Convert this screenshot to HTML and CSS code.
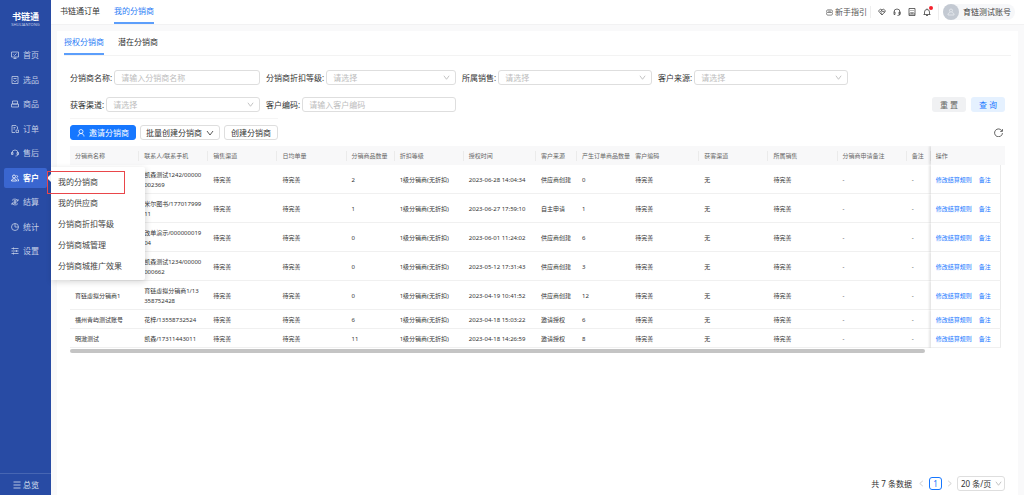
FILE: index.html
```html
<!DOCTYPE html>
<html lang="zh-CN">
<head>
<meta charset="utf-8">
<title>我的分销商</title>
<link rel="stylesheet" href="styles.css">
</head>
<body>
<div class="app">
  <aside class="sidebar">
    <div class="logo"><strong>书链通</strong><small>SHULIANTONG</small></div>
    <nav class="menu">
      <a href="#"><svg viewBox="0 0 16 16"><path d="M1 2h14v10H1zM5 15h6M8 12v3M5 7l2 2 4-4"/></svg>首页</a>
      <a href="#"><svg viewBox="0 0 16 16"><path d="M2 1h12v14H2zM5 5h6M5 8c0 4 6 4 6 0"/></svg>选品</a>
      <a href="#"><svg viewBox="0 0 16 16"><path d="M3 2h10v6H3zM1 8h14v6H1z"/></svg>商品</a>
      <a href="#"><svg viewBox="0 0 16 16"><path d="M8 15H2V1h8l3 3v4M5 5h4M5 8h3M10 10h5v5h-5z"/></svg>订单</a>
      <a href="#"><svg viewBox="0 0 16 16"><path d="M2 10V8a6 6 0 0 1 12 0v2c0 3-2 4-5 4M1 7h3v4H1zM12 7h3v4h-3z"/></svg>售后</a>
      <a href="#" class="active"><svg viewBox="0 0 16 16"><circle cx="6" cy="5" r="3"/><path d="M1 14c0-6 10-6 10 0zM11 3c3 0 3 4 0 4M12 9c2 1 3 2 3 5h-2"/></svg>客户</a>
      <a href="#"><svg viewBox="0 0 16 16"><path d="M14 6A7 7 0 0 0 2 5M2 10a7 7 0 0 0 12 1M14 2v4h-3M2 14v-4h3M6 4l2 3 2-3M8 7v5M5 8h6M5 10h6"/></svg>结算</a>
      <a href="#"><svg viewBox="0 0 16 16"><circle cx="8" cy="8" r="7"/><path d="M8 1v7h7"/></svg>统计</a>
      <a href="#"><svg viewBox="0 0 16 16"><path d="M1 3h14M1 8h14M1 13h14M5 1v4M11 6v4M5 11v4"/></svg>设置</a>
    </nav>
    <a href="#" class="overview"><svg viewBox="0 0 16 16"><path d="M1 2h14M1 8h14M1 14h14"/></svg>总览</a>
    <div class="submenu">
      <a href="#">我的分销商</a>
      <a href="#">我的供应商</a>
      <a href="#">分销商折扣等级</a>
      <a href="#">分销商城管理</a>
      <a href="#">分销商城推广效果</a>
      <div class="highlight"></div>
    </div>
  </aside>

  <div class="content">
    <header class="topbar">
      <nav class="tabs"><a href="#">书链通订单</a><a href="#" class="current">我的分销商</a></nav>
      <div class="tools">
        <a href="#" class="guide"><svg viewBox="0 0 16 16"><path d="M3 2h10l2 3-2 3H3L1 5zM1 8v3l2 3h10l2-3V8M5 5h6"/></svg>新手指引</a>
        <button class="tool" aria-label="合作"><svg viewBox="0 0 16 16"><path d="M1 6l4-4 3 2 3-2 4 4-7 8zM8 4L5 7l2 1 3-2 4 3M5 10l3 3"/></svg></button>
        <button class="tool" aria-label="客服"><svg viewBox="0 0 16 16"><path d="M2 8a6 6 0 0 1 12 0v4c0 2-2 3-5 3M2 8h2v5H2zM12 8h2v5h-2z"/></svg></button>
        <button class="tool" aria-label="反馈"><svg viewBox="0 0 16 16"><path d="M2 1h12v14H2zM6 4v2M10 4v2M5 8c1 3 5 3 6 0M2 12h12"/></svg></button>
        <button class="tool bell" aria-label="通知"><svg viewBox="0 0 16 16"><path d="M1 13h14M3 13V8a5 5 0 0 1 10 0v5M8 1v2M6 15h4"/></svg></button>
        <div class="account"><button class="user"><span class="avatar"><svg viewBox="0 0 16 16"><circle cx="8" cy="5" r="3"/><path d="M6 8c0 2-4 2-4 4v2h12v-2c0-2-4-2-4-4"/></svg></span>育链测试账号</button></div>
      </div>
    </header>

    <main class="panel">
      <nav class="tabs subtabs"><a href="#" class="current">授权分销商</a><a href="#">潜在分销商</a></nav>
      <form class="filters">
        <div class="fields">
          <div class="field"><label for="f1">分销商名称:</label><input id="f1" placeholder="请输入分销商名称"></div>
          <div class="field"><label for="f2">分销商折扣等级:</label><select id="f2"><option>请选择</option></select></div>
          <div class="field"><label for="f3">所属销售:</label><select id="f3"><option>请选择</option></select></div>
          <div class="field"><label for="f4">客户来源:</label><select id="f4"><option>请选择</option></select></div>
          <div class="field"><label for="f5">获客渠道:</label><select id="f5"><option>请选择</option></select></div>
          <div class="field"><label for="f6">客户编码:</label><input id="f6" placeholder="请输入客户编码"></div>
        </div>
        <div class="actions"><button type="reset" class="btn reset">重 置</button><button type="button" class="btn query">查 询</button></div>
      </form>

      <div class="toolbar">
        <div class="group">
          <button class="btn primary"><svg viewBox="0 0 16 16"><circle cx="8" cy="5" r="4"/><path d="M2 15c0-8 12-8 12 0"/></svg>邀请分销商</button>
          <button class="btn batch">批量创建分销商<svg viewBox="0 0 16 16"><path d="M2 4l6 8 6-8"/></svg></button>
          <button class="btn">创建分销商</button>
        </div>
        <button class="refresh" aria-label="刷新"><svg viewBox="0 0 16 16"><path d="M14 5A7 7 0 1 0 15 9M15 2v4h-4"/></svg></button>
      </div>

      <div class="tablebox">
      <table>
        <colgroup><col class="w69"><col class="w69"><col class="w69"><col class="w69"><col class="w48"><col class="w69"><col class="w72"><col class="w41"><col class="w53"><col class="w69"><col class="w69"><col class="w69"><col class="w69"><col class="w24"><col class="w70"><col class="w4"></colgroup>
        <thead><tr><th>分销商名称</th><th>联系人/联系手机</th><th>销售渠道</th><th>日均单量</th><th>分销商品数量</th><th>折扣等级</th><th>授权时间</th><th>客户来源</th><th class="tight">产生订单商品数量</th><th>客户编码</th><th>获客渠道</th><th>所属销售</th><th>分销商申请备注</th><th>备注</th><th colspan="2" class="fixed">操作</th></tr></thead>
        <tbody>
          <tr><td></td><td>凯森测试1242/00000<br>002369</td><td>待完善</td><td>待完善</td><td>2</td><td>1级分销商(无折扣)</td><td>2023-06-28 14:04:34</td><td>供应商创建</td><td>0</td><td>待完善</td><td>无</td><td>待完善</td><td>-</td><td>-</td><td class="fixed"><a href="#">修改结算规则</a><a href="#">备注</a></td><td class="gutter"></td></tr>
          <tr><td></td><td>米尔图书/177017999<br>11</td><td>待完善</td><td>待完善</td><td>1</td><td>1级分销商(无折扣)</td><td>2023-06-27 17:59:10</td><td>自主申请</td><td>1</td><td>待完善</td><td>无</td><td>待完善</td><td>-</td><td>-</td><td class="fixed"><a href="#">修改结算规则</a><a href="#">备注</a></td><td class="gutter"></td></tr>
          <tr><td></td><td>改单演示/000000019<br>04</td><td>待完善</td><td>待完善</td><td>0</td><td>1级分销商(无折扣)</td><td>2023-06-01 11:24:02</td><td>供应商创建</td><td>6</td><td>待完善</td><td>无</td><td>待完善</td><td>-</td><td>-</td><td class="fixed"><a href="#">修改结算规则</a><a href="#">备注</a></td><td class="gutter"></td></tr>
          <tr><td></td><td>凯森测试1234/00000<br>000662</td><td>待完善</td><td>待完善</td><td>0</td><td>1级分销商(无折扣)</td><td>2023-05-12 17:31:43</td><td>供应商创建</td><td>3</td><td>待完善</td><td>无</td><td>待完善</td><td>-</td><td>-</td><td class="fixed"><a href="#">修改结算规则</a><a href="#">备注</a></td><td class="gutter"></td></tr>
          <tr><td>育链虚拟分销商1</td><td>育链虚拟分销商1/13<br>358752428</td><td>待完善</td><td>待完善</td><td>0</td><td>1级分销商(无折扣)</td><td>2023-04-19 10:41:52</td><td>供应商创建</td><td>12</td><td>待完善</td><td>无</td><td>待完善</td><td>-</td><td>-</td><td class="fixed"><a href="#">修改结算规则</a><a href="#">备注</a></td><td class="gutter"></td></tr>
          <tr><td>福州青屿测试账号</td><td>花梓/13558732524</td><td>待完善</td><td>待完善</td><td>6</td><td>1级分销商(无折扣)</td><td>2023-04-18 15:03:22</td><td>邀请授权</td><td>6</td><td>待完善</td><td>无</td><td>待完善</td><td>-</td><td>-</td><td class="fixed"><a href="#">修改结算规则</a><a href="#">备注</a></td><td class="gutter"></td></tr>
          <tr><td>明澈测试</td><td>凯森/17311443011</td><td>待完善</td><td>待完善</td><td>11</td><td>1级分销商(无折扣)</td><td>2023-04-18 14:26:59</td><td>邀请授权</td><td>8</td><td>待完善</td><td>无</td><td>待完善</td><td>-</td><td>-</td><td class="fixed"><a href="#">修改结算规则</a><a href="#">备注</a></td><td class="gutter"></td></tr>
        </tbody>
      </table>
      <div class="scroll"><div class="thumb"></div></div>
      </div>

      <footer class="pager">
        <span class="total">共 7 条数据</span>
        <button class="arrow" aria-label="上一页"><svg viewBox="0 0 16 16"><path d="M11 2L4 8l7 6"/></svg></button>
        <button class="page">1</button>
        <button class="arrow" aria-label="下一页"><svg viewBox="0 0 16 16"><path d="M5 2l7 6-7 6"/></svg></button>
        <select aria-label="每页条数"><option>20 条/页</option></select>
      </footer>
    </main>
  </div>
</div>
</body>
</html>
```
FILE: styles.css
```css
* { box-sizing: border-box; }
body {
  margin: 0;
  font: 8px/12px "Noto Sans", "Noto Sans CJK SC", sans-serif;
  color: #333;
  background: #f9f9fa;
}
a { color: inherit; text-decoration: none; }
button, input, select { font: inherit; color: inherit; margin: 0; }
button { padding: 0; border: 0; background: none; cursor: pointer; }
svg { width: 8px; height: 8px; flex: none; fill: none; stroke: currentColor; stroke-width: 1.6; }
.app { display: flex; min-height: 100vh; }

/* Sidebar */
.sidebar {
  position: relative;
  width: 51px;
  flex: none;
  display: flex;
  flex-direction: column;
  background: #284ba4;
  color: #c3cee6;
}
.logo { display: flex; flex-direction: column; align-items: center; height: 45px; padding-top: 10px; color: #fff; }
.logo strong { font-size: 9px; line-height: 13px; }
.logo small { font-size: 4px; line-height: 4px; color: #c3cee6; }
.menu { display: flex; flex-direction: column; justify-content: space-between; height: 216px; padding: 0 4px; }
.menu a { position: relative; display: flex; align-items: center; gap: 4px; height: 20px; padding-left: 7px; border-radius: 2px; }
.menu .active { background: #3a66d0; color: #fff; font-weight: bold; }
.menu .active::after {
  content: "";
  position: absolute;
  right: -4px;
  top: 6px;
  border: 4px solid transparent;
  border-left: 0;
  border-right-color: #fff;
}
.overview { display: flex; align-items: center; gap: 2px; margin-top: auto; height: 22px; padding-left: 13px; border-top: 1px solid #4766b3; color: #dde4f3; }
.submenu {
  position: absolute;
  z-index: 2;
  left: 51px;
  top: 167px;
  width: 94px;
  padding: 4px 0;
  background: #fff;
  border-radius: 0 2px 2px 0;
  box-shadow: 1px 2px 6px rgba(0, 0, 0, .16);
  color: #444;
}
.submenu a { display: block; padding-left: 7px; line-height: 21px; white-space: nowrap; }
.highlight { position: absolute; left: -4px; top: 4px; width: 78px; height: 23px; border: 1px solid #e9464a; pointer-events: none; }

/* Top bar */
.content { flex: 1; min-width: 0; display: flex; flex-direction: column; }
.topbar { display: flex; justify-content: space-between; height: 25px; padding: 0 9px; background: #fff; border-bottom: 1px solid #f2f2f3; }
.tabs { display: flex; gap: 14px; }
.tabs a { display: flex; align-items: center; border-bottom: 2px solid transparent; }
.tabs .current { color: #2b7cf6; border-bottom-color: #5c9efb; }
.tools { display: flex; align-items: center; gap: 7px; color: #444; }
.guide { display: flex; align-items: center; gap: 2px; padding-right: 3px; border-right: 1px solid #eee; color: #555; }
.guide svg { width: 7px; height: 7px; }
.tool { position: relative; display: flex; }
.bell::after { content: ""; position: absolute; right: -2px; top: -2px; width: 4px; height: 4px; border-radius: 50%; background: #f5222d; }
.account { padding-left: 4px; border-left: 1px solid #eee; }
.user { display: flex; align-items: center; gap: 4px; padding-right: 4px; border-radius: 8px; background: #f6f7f9; }
.avatar { display: flex; align-items: center; justify-content: center; width: 16px; height: 16px; border-radius: 50%; background: #c3c9d2; color: #e9ecf0; }

/* Panel */
.panel { flex: 1; display: flex; flex-direction: column; margin: 6px 6px 0; padding: 0 13px 4px; background: #fff; }
.subtabs { height: 25px; margin: 0 -6px; border-bottom: 1px solid #f3f3f3; }
.filters { display: flex; align-items: flex-end; padding: 14px 0 6px; }
.fields { flex: 1; display: grid; grid-template-columns: repeat(4, minmax(0, 1fr)); gap: 12px 6px; }
.field { display: flex; align-items: center; gap: 2px; white-space: nowrap; }
.field input, .field select { flex: 1; min-width: 0; height: 15px; padding: 0 6px; border: 1px solid #dedede; border-radius: 3px; background-color: #fff; outline: 0; }
.field input::placeholder { color: #bdbdbd; opacity: 1; }
.field select { color: #bdbdbd; }
select {
  appearance: none;
  background: #fff url("data:image/svg+xml,%3Csvg xmlns='http://www.w3.org/2000/svg' viewBox='0 0 8 8'%3E%3Cpath d='M1 2l3 4 3-4' fill='none' stroke='%23bbb'/%3E%3C/svg%3E") no-repeat right 5px center / 7px 7px;
}
.actions { display: flex; justify-content: flex-end; gap: 5px; width: 157px; }
.btn { display: flex; align-items: center; justify-content: center; height: 15px; padding: 0 6px; border: 1px solid #dedede; border-radius: 3px; background: #fff; white-space: nowrap; }
.actions .btn { width: 34px; padding: 0; border: 0; }
.actions .reset { background: #f0f1f3; color: #666; }
.actions .query { background: #e5f1ff; color: #1677ff; }
.toolbar { display: flex; align-items: center; justify-content: space-between; padding-right: 2px; }
.group { display: flex; gap: 4px; padding: 6px 0; border-top: 1px solid #f5f5f5; }
.group .primary { gap: 4px; border-color: #1677ff; background: #1677ff; color: #fff; }
.group .batch { gap: 4px; padding: 0 5px; }
.refresh { display: flex; color: #555; }
.refresh svg { width: 9px; height: 9px; }

/* Table */
table { width: 100%; table-layout: fixed; border-collapse: separate; border-spacing: 0; font-size: 6px; line-height: 10px; }
.w69 { width: 69px; }
.w48 { width: 48px; }
.w72 { width: 72px; }
.w41 { width: 41px; }
.w53 { width: 53px; }
.w24 { width: 24px; }
.w70 { width: 70px; }
.w4 { width: 4px; }
th, td { padding: 5px 0 3px 5px; text-align: left; white-space: nowrap; }
th {
  padding-bottom: 4px;
  font-weight: normal;
  color: #666;
  background: linear-gradient(#ebebeb, #ebebeb) no-repeat right center / 1px 10px #f8f8f9;
  overflow: hidden;
}
.tight { background-image: none; }
td { border-bottom: 1px solid #f0f0f0; }
.fixed { box-shadow: -2px 0 2px rgba(0, 0, 0, .1); clip-path: inset(0 0 0 -5px); }
th.fixed { background: #f8f8f9; }
td.fixed { border-right: 1px solid #e8e8e8; color: #1677ff; }
.fixed a + a { margin-left: 7px; }
.gutter { padding: 0; border: 0; }
.scroll { padding-right: 80px; }
.thumb { height: 4px; margin-top: 1px; border-radius: 2px; background: #c4c4c4; }

/* Pagination */
.pager { display: flex; align-items: center; justify-content: flex-end; gap: 4px; margin-top: auto; }
.total { margin-right: 2px; }
.arrow { display: flex; color: #bbb; }
.arrow svg { width: 7px; height: 7px; }
.page { width: 13px; height: 13px; border: 1px solid #1677ff; border-radius: 3px; color: #1677ff; line-height: 11px; }
.pager select { width: 48px; height: 15px; padding: 0 3px; border: 1px solid #dedede; border-radius: 3px; background-position: right 2px center; }
```
